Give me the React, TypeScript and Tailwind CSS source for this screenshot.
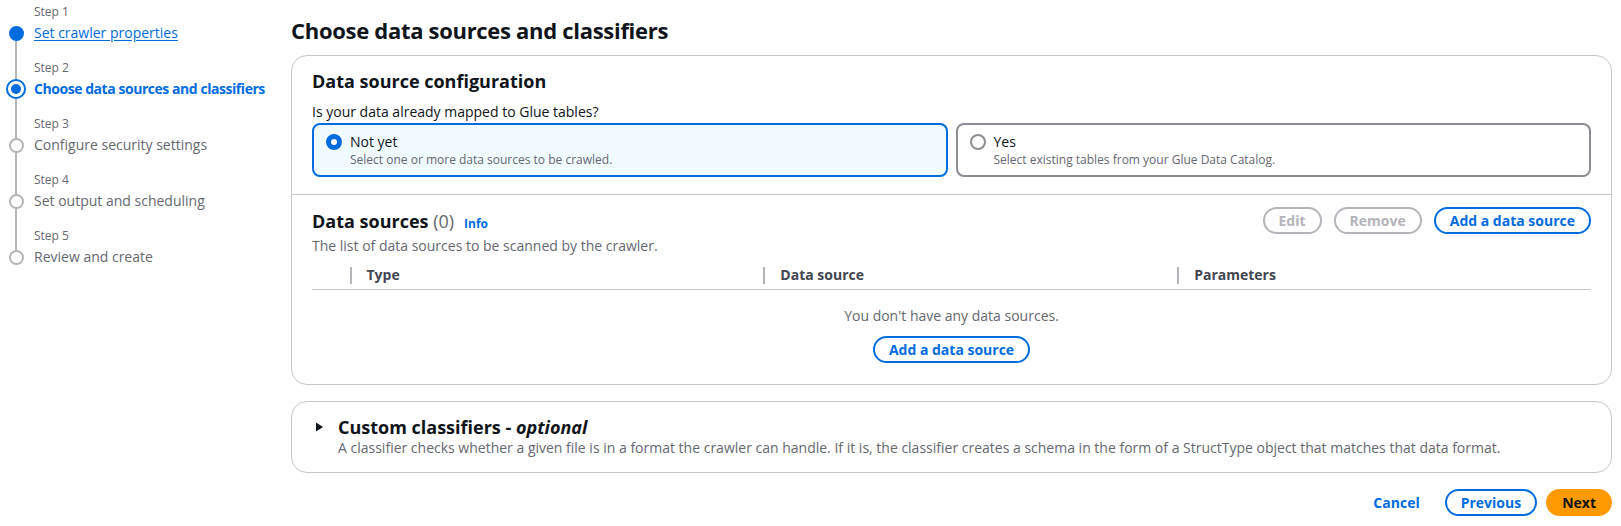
import React from "react";

type StepState = "done" | "current" | "todo";

const steps: { label: string; title: string; state: StepState }[] = [
  { label: "Step 1", title: "Set crawler properties", state: "done" },
  { label: "Step 2", title: "Choose data sources and classifiers", state: "current" },
  { label: "Step 3", title: "Configure security settings", state: "todo" },
  { label: "Step 4", title: "Set output and scheduling", state: "todo" },
  { label: "Step 5", title: "Review and create", state: "todo" },
];

function StepCircle({ state }: { state: StepState }) {
  if (state === "done")
    return <div className="w-[15px] h-[15px] rounded-full bg-[#006ce0] shrink-0" />;
  if (state === "current")
    return (
      <div className="w-[20px] h-[20px] rounded-full border-2 border-[#006ce0] bg-white flex items-center justify-center shrink-0">
        <div className="w-[10px] h-[10px] rounded-full bg-[#006ce0]" />
      </div>
    );
  return <div className="w-[15px] h-[15px] rounded-full border-2 border-[#b4b4bb] bg-white shrink-0" />;
}

function Sidebar() {
  return (
    <nav className="w-[291px] shrink-0 pl-[4px] pt-[4px]">
      {steps.map((s, i) => {
        const first = i === 0;
        const last = i === steps.length - 1;
        const topH = s.state === "current" ? "h-[19px]" : "h-[21.5px]";
        return (
          <div key={s.label} className="flex">
            <div className="w-[24px] flex flex-col items-center">
              <div className={`${topH} w-[2px] ${first ? "" : "bg-[#b4b4bb]"}`} />
              <StepCircle state={s.state} />
              <div className={`flex-1 w-[2px] ${last ? "" : "bg-[#b4b4bb]"}`} />
            </div>
            <div className={`ml-[6px] ${last ? "pb-[4px]" : "pb-[17px]"}`}>
              <div className="text-[12px] leading-[16px] text-[#656871]">{s.label}</div>
              <div className="mt-[3px] text-[14px] leading-[20px] whitespace-nowrap">
                {s.state === "done" && (
                  <a className="text-[#006ce0] underline underline-offset-2 cursor-pointer">{s.title}</a>
                )}
                {s.state === "current" && (
                  <span className="text-[#006ce0] font-bold tracking-[-0.45px]">{s.title}</span>
                )}
                {s.state === "todo" && <span className="text-[#656871]">{s.title}</span>}
              </div>
            </div>
          </div>
        );
      })}
    </nav>
  );
}

function Btn({
  children,
  variant = "normal",
  className = "",
}: {
  children: React.ReactNode;
  variant?: "normal" | "disabled" | "primary" | "link";
  className?: string;
}) {
  const v =
    variant === "normal"
      ? "border-[#006ce0] text-[#006ce0] bg-white"
      : variant === "disabled"
      ? "border-[#b4b4bb] text-[#b4b4bb] bg-white"
      : variant === "primary"
      ? "border-[#ff9900] bg-[#ff9900] text-[#0f141a]"
      : "border-transparent text-[#006ce0] bg-transparent";
  return (
    <button
      className={`h-[27px] px-[14px] rounded-full border-2 text-[14px] leading-[20px] font-bold flex items-center justify-center whitespace-nowrap ${v} ${className}`}
    >
      {children}
    </button>
  );
}

function RadioTile({
  selected,
  label,
  desc,
}: {
  selected: boolean;
  label: string;
  desc: string;
}) {
  return (
    <div
      className={`rounded-[8px] border-2 pl-[12px] pr-[12px] pt-[7px] pb-[7px] flex ${
        selected ? "border-[#006ce0] bg-[#f0fbff]" : "border-[#8c8c94] bg-white"
      }`}
    >
      <div className="h-[20px] flex items-center">
        {selected ? (
          <div className="w-[16px] h-[16px] rounded-full border-[5px] border-[#006ce0] bg-white" />
        ) : (
          <div className="w-[16px] h-[16px] rounded-full border-2 border-[#8c8c94] bg-white" />
        )}
      </div>
      <div className="ml-[8px]">
        <div className="text-[14px] leading-[20px] text-[#0f141a]">{label}</div>
        <div className="text-[12px] leading-[16px] text-[#656871]">{desc}</div>
      </div>
    </div>
  );
}

function HeaderCell({ children }: { children: React.ReactNode }) {
  return (
    <div className="flex items-center">
      <div className="w-[2px] h-[17px] bg-[#b4b4bb]" />
      <span className="ml-[15px] text-[14px] leading-[20px] font-bold text-[#424650]">{children}</span>
    </div>
  );
}

export default function App() {
  return (
    <div className="flex min-h-[526px] bg-white text-[#0f141a] font-['Open_Sans',sans-serif]">
      <Sidebar />
      <main className="flex-1 min-w-0 pr-[9px]">
        <h1 className="pt-[15px] text-[22px] leading-[30px] font-bold tracking-[-0.3px] text-[#0f141a]">
          Choose data sources and classifiers
        </h1>

        <section className="mt-[10px] rounded-[16px] border border-[#c6c6cd] bg-white">
          <div className="px-[20px] pt-[14px] pb-[17px] border-b border-[#c6c6cd]">
            <h2 className="text-[18px] leading-[22px] font-bold">Data source configuration</h2>
            <p className="mt-[10px] text-[14px] leading-[20px]">Is your data already mapped to Glue tables?</p>
            <div className="mt-[1px] grid grid-cols-2 gap-[8px]">
              <RadioTile selected label="Not yet" desc="Select one or more data sources to be crawled." />
              <RadioTile selected={false} label="Yes" desc="Select existing tables from your Glue Data Catalog." />
            </div>
          </div>

          <div className="px-[20px] pt-[12px] pb-[21px]">
            <div className="flex items-center justify-between h-[27px]">
              <div className="flex items-baseline">
                <h2 className="text-[18px] leading-[22px] font-bold">
                  Data sources <span className="font-normal text-[#656871]">(0)</span>
                </h2>
                <a className="ml-[10px] text-[12px] leading-[16px] font-bold text-[#006ce0] cursor-pointer">Info</a>
              </div>
              <div className="flex gap-[12px]">
                <Btn variant="disabled">Edit</Btn>
                <Btn variant="disabled">Remove</Btn>
                <Btn>Add a data source</Btn>
              </div>
            </div>
            <p className="mt-[2px] text-[14px] leading-[20px] text-[#656871]">
              The list of data sources to be scanned by the crawler.
            </p>

            <div className="mt-[5px] grid grid-cols-[37.5px_1fr_1fr_1fr] h-[29px] border-b border-[#c6c6cd]">
              <div />
              <HeaderCell>Type</HeaderCell>
              <HeaderCell>Data source</HeaderCell>
              <HeaderCell>Parameters</HeaderCell>
            </div>

            <div className="flex flex-col items-center pt-[16px]">
              <p className="text-[14px] leading-[20px] text-[#656871]">You don't have any data sources.</p>
              <Btn className="mt-[10px] h-[26px]">Add a data source</Btn>
            </div>
          </div>
        </section>

        <section className="mt-[16px] rounded-[16px] border border-[#c6c6cd] bg-white px-[20px] py-[14px]">
          <div className="flex items-center">
            <svg width="14" height="22" viewBox="0 0 14 22" className="shrink-0 mr-[12px]">
              <path d="M4 6.5 L11 11 L4 15.5 Z" fill="#0f141a" />
            </svg>
            <h2 className="text-[18px] leading-[22px] font-bold">
              Custom classifiers - <i>optional</i>
            </h2>
          </div>
          <p className="ml-[26px] text-[14px] leading-[20px] text-[#656871]">
            A classifier checks whether a given file is in a format the crawler can handle. If it is, the classifier
            creates a schema in the form of a StructType object that matches that data format.
          </p>
        </section>

        <div className="mt-[16px] flex justify-end items-center gap-[9px]">
          <Btn variant="link">Cancel</Btn>
          <Btn>Previous</Btn>
          <Btn variant="primary">Next</Btn>
        </div>
      </main>
    </div>
  );
}
